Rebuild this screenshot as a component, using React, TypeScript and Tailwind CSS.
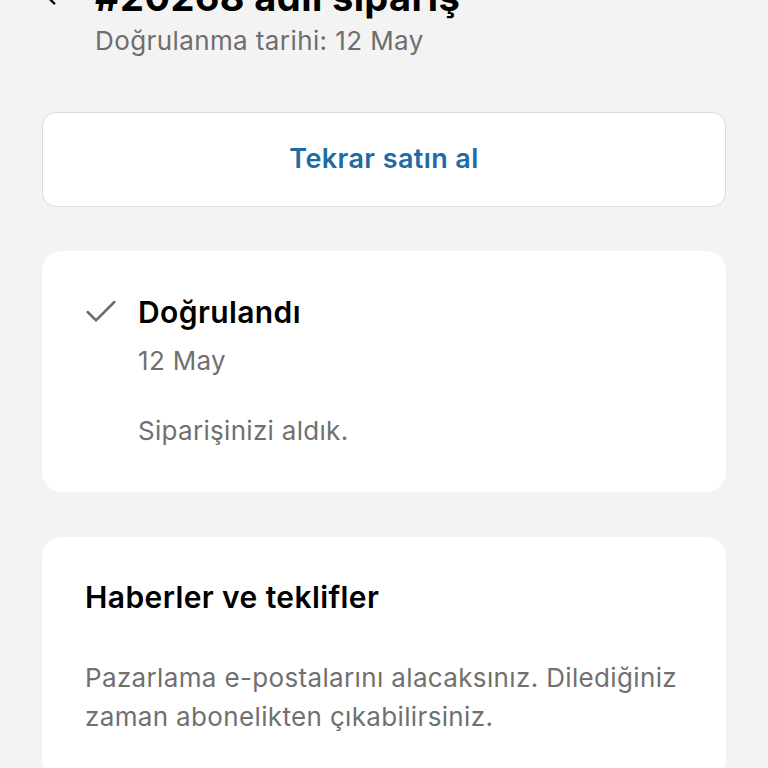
import { Check, ChevronLeft } from "lucide-react";

export default function App() {
  const font = { fontFamily: "Inter, 'Noto Sans', sans-serif" };

  return (
    <div className="min-h-screen bg-[#f3f3f3] px-[42px] overflow-hidden" style={font}>
      {/* Header (scrolled, title partly hidden) */}
      <header className="mt-[-25px] flex items-start">
        <ChevronLeft className="w-[26px] h-[44px] -ml-[4px] text-black" strokeWidth={2.2} />
        <div className="ml-[31px]">
          <h1 className="text-[38px] leading-[44px] font-bold text-black tracking-[0.4px]">
            #20268 adlı sipariş
          </h1>
          <p className="mt-[6px] text-[26px] leading-[32px] text-[#6e6e6e] tracking-[0.4px]">
            Doğrulanma tarihi: 12 May
          </p>
        </div>
      </header>

      {/* Buy again */}
      <button className="mt-[55px] w-full h-[95px] bg-white border border-[#dcdcdc] rounded-[14px] flex items-center justify-center">
        <span className="text-[27px] font-semibold text-[#1f6ba5] tracking-[0.4px]">Tekrar satın al</span>
      </button>

      {/* Status */}
      <section className="mt-[44px] bg-white rounded-[20px] px-[43px] pt-[43px] pb-[43px]">
        <div className="flex items-center h-[36px]">
          <Check className="w-[40px] h-[40px] -my-[2px] text-[#6b6b6b] -ml-[4px]" strokeWidth={1.5} />
          <h2 className="ml-[17px] text-[30px] leading-[36px] font-semibold text-black tracking-[0.4px]">Doğrulandı</h2>
        </div>
        <div className="pl-[53px]">
          <p className="mt-[13px] text-[26px] leading-[36px] text-[#707070] tracking-[0.3px]">12 May</p>
          <p className="mt-[34px] text-[26px] leading-[36px] text-[#707070] tracking-[0.3px]">Siparişinizi aldık.</p>
        </div>
      </section>

      {/* News and offers */}
      <section className="mt-[45px] bg-white rounded-[20px] px-[43px] pt-[42px] pb-[43px]">
        <h2 className="text-[30px] leading-[36px] font-semibold text-black tracking-[0.4px]">Haberler ve teklifler</h2>
        <p className="mt-[43px] text-[26px] leading-[39px] text-[#707070] tracking-[0.35px]">
          Pazarlama e-postalarını alacaksınız. Dilediğiniz zaman abonelikten çıkabilirsiniz.
        </p>
      </section>
    </div>
  );
}
